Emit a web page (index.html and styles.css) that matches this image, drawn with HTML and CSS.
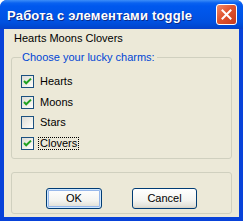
FILE: index.html
```html
<!DOCTYPE html>
<html>
<head>
<meta charset="utf-8">
<link rel="stylesheet" href="styles.css">
</head>
<body>
<div class="window">
  <div class="titlebar">
    <span class="title">Работа с элементами toggle</span>
    <span class="close">
      <svg width="11" height="11" viewBox="0 0 11 11"><path d="M1.5 1.5 L9.5 9.5 M9.5 1.5 L1.5 9.5" stroke="#fff" stroke-width="2" stroke-linecap="square"/></svg>
    </span>
  </div>
  <div class="client">
    <div class="summary">Hearts Moons Clovers</div>
    <fieldset class="group">
      <legend class="legend">Choose your lucky charms:</legend>
      <div class="row"><span class="cb checked"><svg width="11" height="11" viewBox="0 0 11 11"><path d="M2 5 L4.2 7.3 L9 2.6" fill="none" stroke="#21a121" stroke-width="2"/></svg></span><span class="lbl">Hearts</span></div>
      <div class="row"><span class="cb checked"><svg width="11" height="11" viewBox="0 0 11 11"><path d="M2 5 L4.2 7.3 L9 2.6" fill="none" stroke="#21a121" stroke-width="2"/></svg></span><span class="lbl">Moons</span></div>
      <div class="row"><span class="cb"></span><span class="lbl">Stars</span></div>
      <div class="row"><span class="cb checked"><svg width="11" height="11" viewBox="0 0 11 11"><path d="M2 5 L4.2 7.3 L9 2.6" fill="none" stroke="#21a121" stroke-width="2"/></svg></span><span class="lbl focus">Clovers</span></div>
    </fieldset>
    <div class="buttons">
      <button class="btn default">OK</button>
      <button class="btn cancel">Cancel</button>
    </div>
  </div>
</div>
</body>
</html>
```
FILE: styles.css
```css
html, body {
  margin: 0;
  padding: 0;
  background: #ffffff;
}
.window {
  width: 243px;
  height: 221px;
  display: flex;
  flex-direction: column;
  background: #0842d9;
  border-radius: 7px 7px 0 0;
  overflow: hidden;
  font-family: "Liberation Sans", Arial, sans-serif;
  font-size: 11px;
}
.titlebar {
  height: 29px;
  flex: none;
  display: flex;
  align-items: center;
  justify-content: space-between;
  padding: 0 6px 0 7px;
  background: linear-gradient(#3d8ef8 0px, #0a62f0 3px, #0058ee 6px, #0055e8 14px, #0051e0 22px, #0047d0 27px, #0a40c8 29px);
}
.title {
  color: #ffffff;
  font-weight: bold;
  font-size: 13px;
  letter-spacing: 0.2px;
  text-shadow: 1px 1px 0 #0a2a8a;
  padding-top: 1px;
}
.close {
  width: 19px;
  height: 19px;
  border: 1px solid #ffffff;
  border-radius: 3px;
  background: linear-gradient(135deg, #f08a6a 0%, #e0542f 45%, #c83a1c 100%);
  display: flex;
  align-items: center;
  justify-content: center;
}
.client {
  flex: 1;
  margin: 0 4px 4px 4px;
  background: #ece9d8;
  padding: 3px 7px 0 7px;
  color: #000000;
}
.summary {
  line-height: 13px;
  padding-left: 3px;
}
.group {
  margin: 6px 0 0 0;
  padding: 7px 0 4px 9px;
  border: 1px solid #d0d0bf;
  border-radius: 3px;
  min-width: 0;
}
.legend {
  color: #0046d5;
  padding: 0 2px 0 1px;
  margin-left: 0;
  line-height: 13px;
}
.row {
  height: 20.7px;
  display: flex;
  align-items: center;
}
.cb {
  width: 11px;
  height: 11px;
  border: 1px solid #1c5180;
  background: linear-gradient(135deg, #dcdcd7 0%, #f5f4ee 70%, #ffffff 100%);
  display: flex;
  align-items: center;
  justify-content: center;
  flex: none;
}
.lbl {
  margin-left: 4px;
  line-height: 11px;
  padding: 0 1px;
  border: 1px dotted transparent;
}
.lbl.focus {
  border-color: #000000;
}
.buttons {
  margin-top: 13px;
  height: 42px;
  box-sizing: border-box;
  border: 1px solid #d0d0bf;
  border-radius: 3px;
  display: flex;
  justify-content: center;
  align-items: flex-start;
  gap: 30px;
  padding-top: 15px;
}
.btn {
  height: 21px;
  box-sizing: border-box;
  border: 1px solid #003c74;
  border-radius: 3px;
  background: linear-gradient(#ffffff 0%, #f4f4f0 60%, #e3e2da 90%, #d6d0c5 100%);
  font-family: "Liberation Sans", Arial, sans-serif;
  font-size: 11px;
  color: #000000;
  padding: 0;
  margin: 0;
}
.btn.default {
  width: 56px;
  box-shadow: inset 0 0 0 1px #cee7ff, inset 0 0 0 2px #98b8ea;
}
.btn.cancel {
  width: 65px;
}
```
